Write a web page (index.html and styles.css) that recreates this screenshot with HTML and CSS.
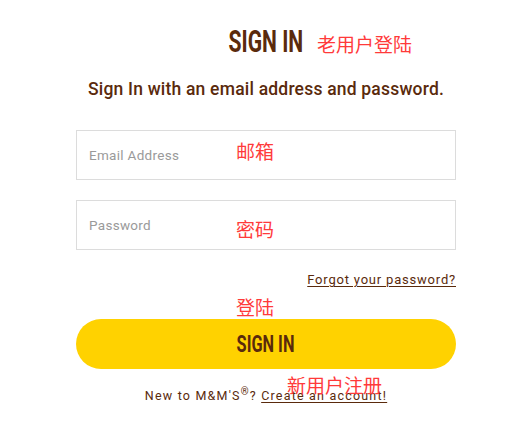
FILE: index.html
```html
<!DOCTYPE html>
<html lang="en">
<head>
  <meta charset="UTF-8" />
  <title>Sign In</title>
  <link rel="stylesheet" href="styles.css">
</head>
<body>

  <div class="page">
    <div class="signin">
      <h1><span class="condensed">SIGN IN</span></h1>
      <p class="intro">Sign In with an email address and password.</p>

      <form class="signin-form">
        <input type="email" placeholder="Email Address" />
        <input type="password" placeholder="Password" />

        <div class="forgot"><a href="#">Forgot your password?</a></div>

        <button type="submit"><span class="condensed">SIGN IN</span></button>
      </form>

      <p class="register">New to M&amp;M'S<sup>&reg;</sup>? <a href="#">Create an account!</a></p>
    </div>

    <!-- annotations -->
    <span class="note note-title">老用户登陆</span>
    <span class="note note-email">邮箱</span>
    <span class="note note-password">密码</span>
    <span class="note note-submit">登陆</span>
    <span class="note note-register">新用户注册</span>
  </div>

</body>
</html>
```

FILE: styles.css
```css
body {
  margin: 0;
  background: #fff;
  font-family: Roboto, "Liberation Sans", sans-serif;
  color: #5a2a0c;
}

.page {
  position: relative;
  width: 510px;
  height: 424px;
}

.signin {
  width: 380px;
  margin-left: 76px;
  padding-top: 24px;
}

.condensed {
  display: inline-block;
  font-weight: 700;
  transform: scaleX(0.68);
}

h1 {
  margin: 0;
  text-align: center;
  font-size: 31px;
  line-height: 36px;
  color: #5a2a0c;
}

.intro {
  margin: 19px 0 0;
  text-align: center;
  font-size: 17.5px;
  font-weight: 500;
  line-height: 21px;
  letter-spacing: 0.2px;
}

.signin-form {
  display: flex;
  flex-direction: column;
  margin-top: 30px;
}

.signin-form input {
  box-sizing: border-box;
  height: 50px;
  padding: 0 12px;
  border: 1px solid #dcdcdc;
  font-family: Roboto, sans-serif;
  font-size: 13.5px;
  letter-spacing: 0.3px;
  outline: none;
}

.signin-form input + input {
  margin-top: 20px;
}

.signin-form input::placeholder {
  color: #9a9a9a;
}

.forgot {
  text-align: right;
  margin-top: 21px;
  font-size: 13px;
  line-height: 18px;
  letter-spacing: 0.8px;
}

.forgot a,
.register a {
  color: #5a2a0c;
  text-decoration: underline;
  text-underline-offset: 2px;
}

.signin-form button {
  height: 50px;
  margin-top: 30px;
  border: none;
  border-radius: 25px;
  background: #ffd200;
  color: #5a2a0c;
  font-family: Roboto, sans-serif;
  font-size: 24px;
  cursor: pointer;
}

.register {
  margin: 19px 0 0;
  text-align: center;
  font-size: 12.5px;
  line-height: 16px;
  letter-spacing: 1.2px;
}

.register sup {
  font-size: 10px;
  line-height: 0;
}

.note {
  position: absolute;
  font-family: "Noto Sans CJK SC", sans-serif;
  font-size: 19px;
  line-height: 22px;
  color: #ff3a3a;
}

.note-title { left: 317px; top: 33px; }
.note-email { left: 236px; top: 140px; }
.note-password { left: 236px; top: 218px; }
.note-submit { left: 236px; top: 296px; }
.note-register { left: 287px; top: 374px; }
```
